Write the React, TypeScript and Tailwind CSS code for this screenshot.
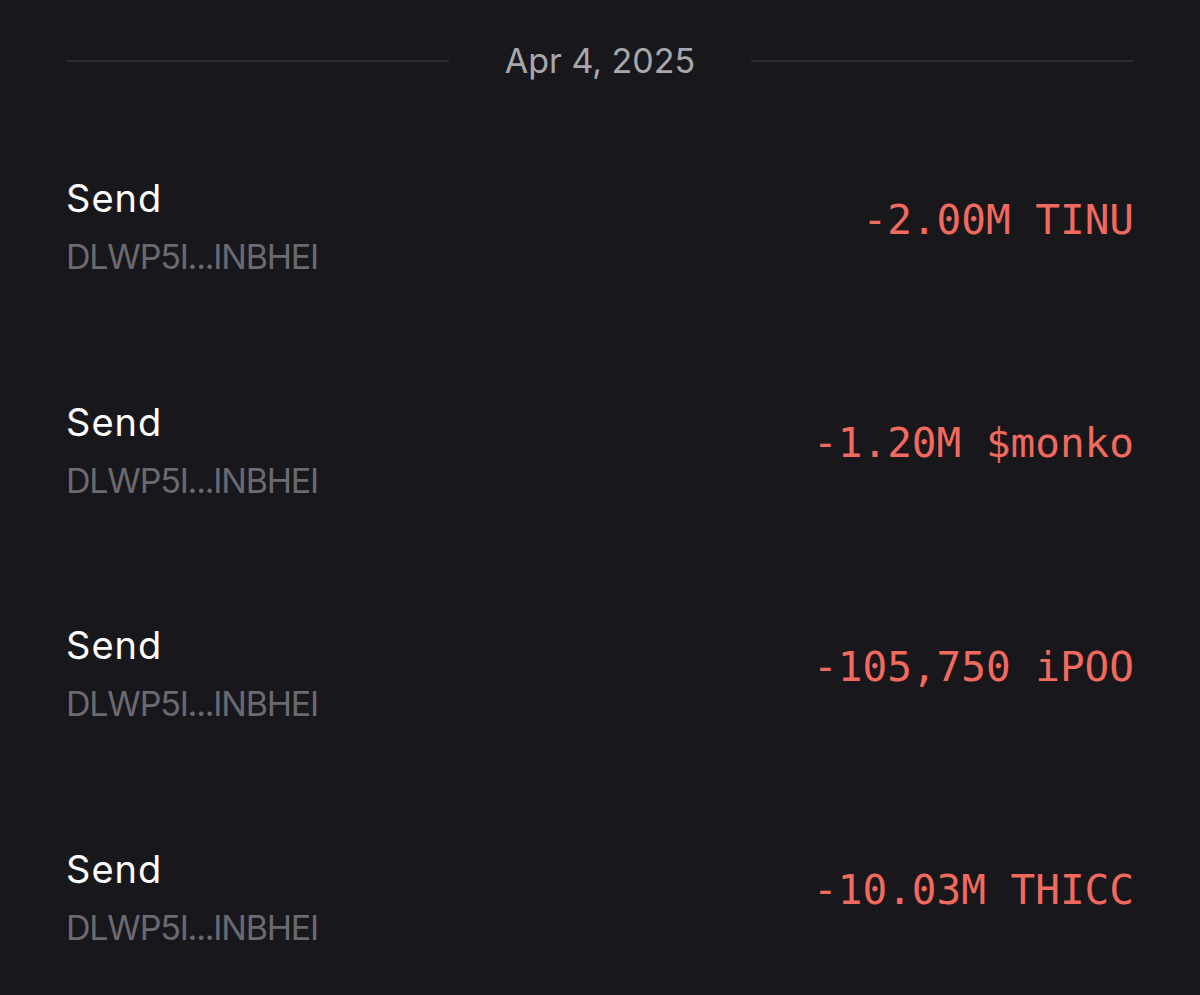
import React from 'react';

const rows = [
  { label: 'Send', address: 'DLWP5I...INBHEI', amount: '-2.00M TINU' },
  { label: 'Send', address: 'DLWP5I...INBHEI', amount: '-1.20M $monko' },
  { label: 'Send', address: 'DLWP5I...INBHEI', amount: '-105,750 iPOO' },
  { label: 'Send', address: 'DLWP5I...INBHEI', amount: '-10.03M THICC' },
];

export default function App() {
  return (
    <div className="w-[1200px] h-[995px] overflow-hidden bg-[#18171c] px-[66px] font-['Inter',sans-serif]">
      {/* Date divider */}
      <div className="flex items-center h-[115px] pt-[7px]">
        <div className="flex-1 h-[2px] bg-[#2c2b31]" />
        <span className="px-[56px] text-[34px] leading-none text-[#a8a7ac]">Apr 4, 2025</span>
        <div className="flex-1 h-[2px] bg-[#2c2b31]" />
      </div>

      {/* Transactions */}
      <div className="flex flex-col">
        {rows.map((row, i) => (
          <div key={i} className="flex items-center justify-between h-[223.5px]">
            <div className="flex flex-col gap-[23px]">
              <span className="text-[38px] leading-none tracking-[1px] text-white">{row.label}</span>
              <span className="text-[34px] leading-none tracking-[-1.2px] text-[#6b6a70]">{row.address}</span>
            </div>
            <span className="text-[41px] leading-none text-[#f26a5e] font-['DejaVu_Sans_Mono',monospace] mb-[13px]">
              {row.amount}
            </span>
          </div>
        ))}
      </div>
    </div>
  );
}
